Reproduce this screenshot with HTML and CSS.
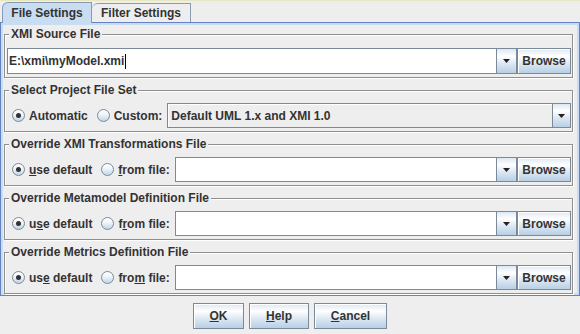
FILE: index.html
```html
<!DOCTYPE html>
<html>
<head>
<meta charset="utf-8">
<title>File Settings</title>
<link rel="stylesheet" href="styles.css">
</head>
<body>
<div class="dialog">
  <div class="tabs">
    <div class="tab active">File Settings</div>
    <div class="tab">Filter Settings</div>
  </div>
  <div class="panel">
    <fieldset class="group first">
      <legend>XMI Source File</legend>
      <div class="row">
        <div class="combo">
          <div class="field">E:\xmi\myModel.xmi<span class="caret"></span></div>
          <div class="arrow"><svg width="7" height="4" viewBox="0 0 7 4"><polygon points="0,0 7,0 3.5,4" fill="#222"/></svg></div>
        </div>
        <div class="btn browse">Browse</div>
      </div>
    </fieldset>
    <fieldset class="group">
      <legend>Select Project File Set</legend>
      <div class="row">
        <span class="radio on"></span><span class="lbl">Automatic</span>
        <span class="radio"></span><span class="lbl last">Custom:</span>
        <div class="combo plain">
          <div class="field">Default UML 1.x and XMI 1.0</div>
          <div class="arrow"><svg width="7" height="4" viewBox="0 0 7 4"><polygon points="0,0 7,0 3.5,4" fill="#222"/></svg></div>
        </div>
      </div>
    </fieldset>
    <fieldset class="group">
      <legend>Override XMI Transformations File</legend>
      <div class="row">
        <span class="radio on"></span><span class="lbl"><u>u</u>se default</span>
        <span class="radio"></span><span class="lbl last"><u>f</u>rom file:</span>
        <div class="combo">
          <div class="field"></div>
          <div class="arrow"><svg width="7" height="4" viewBox="0 0 7 4"><polygon points="0,0 7,0 3.5,4" fill="#222"/></svg></div>
        </div>
        <div class="btn browse">Browse</div>
      </div>
    </fieldset>
    <fieldset class="group">
      <legend>Override Metamodel Definition File</legend>
      <div class="row">
        <span class="radio on"></span><span class="lbl">u<u>s</u>e default</span>
        <span class="radio"></span><span class="lbl last">f<u>r</u>om file:</span>
        <div class="combo">
          <div class="field"></div>
          <div class="arrow"><svg width="7" height="4" viewBox="0 0 7 4"><polygon points="0,0 7,0 3.5,4" fill="#222"/></svg></div>
        </div>
        <div class="btn browse">Browse</div>
      </div>
    </fieldset>
    <fieldset class="group">
      <legend>Override Metrics Definition File</legend>
      <div class="row">
        <span class="radio on"></span><span class="lbl">us<u>e</u> default</span>
        <span class="radio"></span><span class="lbl last">fro<u>m</u> file:</span>
        <div class="combo">
          <div class="field"></div>
          <div class="arrow"><svg width="7" height="4" viewBox="0 0 7 4"><polygon points="0,0 7,0 3.5,4" fill="#222"/></svg></div>
        </div>
        <div class="btn browse">Browse</div>
      </div>
    </fieldset>
  </div>
  <div class="actions">
    <div class="btn ok"><u>O</u>K</div>
    <div class="btn help"><u>H</u>elp</div>
    <div class="btn cancel"><u>C</u>ancel</div>
  </div>
</div>
</body>
</html>
```
FILE: styles.css
```css
html, body {
  margin: 0;
  padding: 0;
  background: #eeeeee;
}
body {
  width: 580px;
  height: 334px;
  overflow: hidden;
  font-family: "Liberation Sans", Arial, sans-serif;
  font-size: 12px;
  font-weight: bold;
  color: #333333;
}
.dialog {
  display: flex;
  flex-direction: column;
  width: 580px;
  height: 334px;
}
.tabs {
  display: flex;
  align-items: flex-end;
  height: 22px;
  padding-left: 2px;
  box-sizing: border-box;
  border-top: 1px solid #e8e8c0;
}
.tab {
  box-sizing: border-box;
  display: flex;
  align-items: center;
  justify-content: center;
  height: 19px;
  width: 99px;
  border: 1px solid #8a9bb3;
  border-left: none;
  border-bottom: none;
  border-top-left-radius: 6px;
  background: #eeeeee;
}
.tab.active {
  width: 90px;
  height: 21px;
  margin-bottom: -1px;
  border-left: 1px solid #8a9bb3;
  background: #c8ddf2;
  position: relative;
  z-index: 1;
  padding-bottom: 1px;
}
.panel {
  box-sizing: border-box;
  height: 274px;
  border: 1px solid #6382bf;
  box-shadow: inset 0 0 0 2px #c8ddf2;
  padding: 4px 6px 0 3px;
  display: flex;
  flex-direction: column;
  gap: 5px;
}
.group {
  margin: 0;
  border: 1px solid #8f8f8f;
  box-shadow: inset 1px 1px 0 #ffffff, 1px 1px 0 #ffffff;
  padding: 6px 1px 3px 2px;
  min-width: 0;
}
.group.first {
  padding-top: 7px;
  padding-bottom: 3px;
}
.group legend {
  padding: 0 2px;
  margin-left: 2px;
  line-height: 14px;
  background: #eeeeee;
  color: #333333;
}
.row {
  display: flex;
  align-items: center;
  height: 25px;
}
.first .row {
  height: 26px;
}
.radio {
  box-sizing: border-box;
  flex: none;
  width: 13px;
  height: 13px;
  border-radius: 50%;
  border: 1px solid #7a8a99;
  background: linear-gradient(to bottom, #ffffff 0%, #f4f8fb 35%, #dde8f3 65%, #c2d5e9 100%);
  margin-left: 5px;
  margin-right: 4px;
  display: flex;
  align-items: center;
  justify-content: center;
}
.radio.on::after {
  content: "";
  width: 5px;
  height: 5px;
  border-radius: 50%;
  background: #333333;
}
.lbl {
  white-space: nowrap;
  margin-right: 4px;
}
.lbl.last {
  margin-right: 5px;
}
.lbl u, .btn u {
  text-decoration: underline;
  text-underline-offset: 1px;
}
.combo {
  flex: 1;
  display: flex;
  height: 100%;
  min-width: 0;
}
.field {
  flex: 1;
  box-sizing: border-box;
  border: 1px solid #7a8a99;
  background: #ffffff;
  display: flex;
  align-items: center;
  padding-left: 1px;
  font-weight: bold;
  color: #333333;
  white-space: nowrap;
}
.caret {
  display: inline-block;
  width: 1px;
  height: 15px;
  background: #000000;
  margin-left: 1px;
}
.combo.plain .field {
  background: #eeeeee;
  box-shadow: inset 1px 1px 0 #ffffff;
  padding-left: 3px;
}
.arrow {
  box-sizing: border-box;
  width: 20px;
  flex: none;
  border: 1px solid #7a8a99;
  border-left: none;
  background: linear-gradient(to bottom, #dde8f3 0%, #ffffff 30%, #dde8f3 60%, #b8cfe5 100%);
  display: flex;
  align-items: center;
  justify-content: center;
}
.combo.plain .arrow {
  width: 18px;
}
.btn {
  box-sizing: border-box;
  border: 1px solid #7a8a99;
  box-shadow: inset 1px 1px 0 #ffffff;
  background: linear-gradient(to bottom, #dde8f3 0%, #ffffff 30%, #dde8f3 60%, #b8cfe5 100%);
  display: flex;
  align-items: center;
  justify-content: center;
  height: 100%;
  color: #333333;
  white-space: nowrap;
}
.browse {
  width: 54px;
  flex: none;
}
.actions {
  flex: 1;
  display: flex;
  justify-content: center;
  align-items: flex-start;
  gap: 5px;
  padding-top: 7px;
}
.actions .btn {
  height: 26px;
}
.ok { width: 51px; }
.help { width: 60px; }
.cancel { width: 73px; }
```
